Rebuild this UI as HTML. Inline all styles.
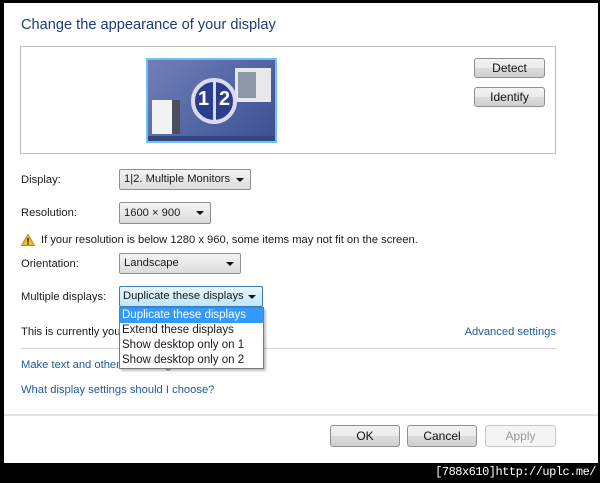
<!DOCTYPE html>
<html><head><style>
*{margin:0;padding:0;box-sizing:border-box}
body{width:600px;height:483px;background:#000;position:relative;overflow:hidden;font-family:"Liberation Sans","DejaVu Sans",sans-serif;font-size:11.2px;color:#1a1a1a}
.a{position:absolute}
.w{left:4px;top:3px;width:594px;height:460px;background:#fff}
.btn{position:absolute;border:1px solid #8e8f8f;border-radius:3px;background:linear-gradient(#f2f2f2 0%,#ebebeb 50%,#dddddd 51%,#cfcfcf 100%);text-align:center;font-size:12px;color:#111}
.dd{position:absolute;border:1px solid #8e8f8f;border-radius:2px;background:linear-gradient(#f4f4f4,#dcdcdc);padding-left:4px;font-size:11.2px;line-height:19px}
.dd:after{content:"";position:absolute;right:6px;top:8px;border-left:4px solid transparent;border-right:4px solid transparent;border-top:4px solid #111}
.lnk{color:#1e5a9e}
</style></head><body>
<div class="a w"></div>
<div class="a" style="left:21px;top:17px;font-size:14.6px;color:#1e3a78">Change the appearance of your display</div>
<div class="a" style="left:20px;top:46px;width:536px;height:108px;border:1px solid #bdbdbd"></div>
<div class="a" style="left:146px;top:58px;width:131px;height:85px;background:#6ec3f0;padding:2px">
 <div style="width:100%;height:100%;background:linear-gradient(135deg,#6f80b8,#3d4f92);position:relative">
  <div class="a" style="left:87px;top:8px;width:36px;height:34px;background:#e8e8ea"></div>
  <div class="a" style="left:90px;top:12px;width:18px;height:26px;background:#8b98a8"></div>
  <div class="a" style="left:4px;top:40px;width:20px;height:34px;background:#f2f2f2"></div>
  <div class="a" style="left:24px;top:40px;width:8px;height:34px;background:#4b4f5c"></div>
  <div class="a" style="left:0;bottom:0;width:100%;height:5px;background:#34467f"></div>
  <div class="a" style="left:43px;top:18px;width:46px;height:46px;border-radius:50%;background:#2b3d8c;border:4px solid #d8dcee"></div>
  <div class="a" style="left:65px;top:18px;width:3px;height:46px;background:#d8dcee"></div>
  <div class="a" style="left:50px;top:28px;color:#fff;font-weight:bold;font-size:20px">1</div>
  <div class="a" style="left:71px;top:28px;color:#fff;font-weight:bold;font-size:20px">2</div>
 </div>
</div>
<div class="btn" style="left:474px;top:58px;width:71px;height:20px;line-height:18px">Detect</div>
<div class="btn" style="left:474px;top:87px;width:71px;height:20px;line-height:18px">Identify</div>

<div class="a" style="left:21px;top:174px">Display:</div>
<div class="dd" style="left:119px;top:169px;width:132px;height:21px">1|2. Multiple Monitors</div>
<div class="a" style="left:21px;top:207px">Resolution:</div>
<div class="dd" style="left:119px;top:202px;width:92px;height:22px;line-height:20px">1600 × 900</div>
<svg class="a" style="left:21px;top:234px" width="14" height="12"><path d="M7 0.5L13.5 11.5H0.5Z" fill="#f0c020" stroke="#b08a10"/><rect x="6.3" y="4" width="1.4" height="4.5" fill="#222"/><rect x="6.3" y="9.2" width="1.4" height="1.4" fill="#222"/></svg>
<div class="a" style="left:41px;top:234px">If your resolution is below 1280 x 960, some items may not fit on the screen.</div>
<div class="a" style="left:21px;top:258px">Orientation:</div>
<div class="dd" style="left:119px;top:253px;width:122px;height:21px">Landscape</div>
<div class="a" style="left:21px;top:291px">Multiple displays:</div>
<div class="dd" style="left:119px;top:286px;width:144px;height:21px;border-color:#3c7fb1;background:linear-gradient(#eaf6fd,#bee6fd);padding-left:3px">Duplicate these displays</div>
<div class="a" style="left:21px;top:326px">This is currently you</div>
<div class="a lnk" style="right:44px;top:326px">Advanced settings</div>
<div class="a" style="left:21px;top:348px;width:535px;height:1px;background:#d5d5d5"></div>
<div class="a lnk" style="left:21px;top:359px">Make text and other items larger or smaller</div>
<div class="a lnk" style="left:21px;top:384px">What display settings should I choose?</div>
<div class="a" style="left:119px;top:307px;width:145px;height:62px;background:#fff;border:1px solid #7a7a7a;box-shadow:2px 2px 2px rgba(0,0,0,.25);font-size:11.5px;line-height:15px">
 <div style="background:#3399ff;color:#fff;padding-left:2px">Duplicate these displays</div>
 <div style="padding-left:2px">Extend these displays</div>
 <div style="padding-left:2px">Show desktop only on 1</div>
 <div style="padding-left:2px">Show desktop only on 2</div>
</div>
<div class="a" style="left:4px;top:414px;width:594px;height:2px;background:#e4e4e4"></div>
<div class="btn" style="left:330px;top:425px;width:70px;height:22px;line-height:20px">OK</div>
<div class="btn" style="left:407px;top:425px;width:70px;height:22px;line-height:20px">Cancel</div>
<div class="btn" style="left:485px;top:425px;width:71px;height:22px;line-height:20px;background:#f4f4f4;border-color:#c8c8c8;color:#9a9a9a">Apply</div>
<div class="a" style="right:4px;top:465px;color:#fff;font-family:'Liberation Mono',monospace;font-size:12px;letter-spacing:-0.5px">[788x610]http://uplc.me/</div>
</body></html>
